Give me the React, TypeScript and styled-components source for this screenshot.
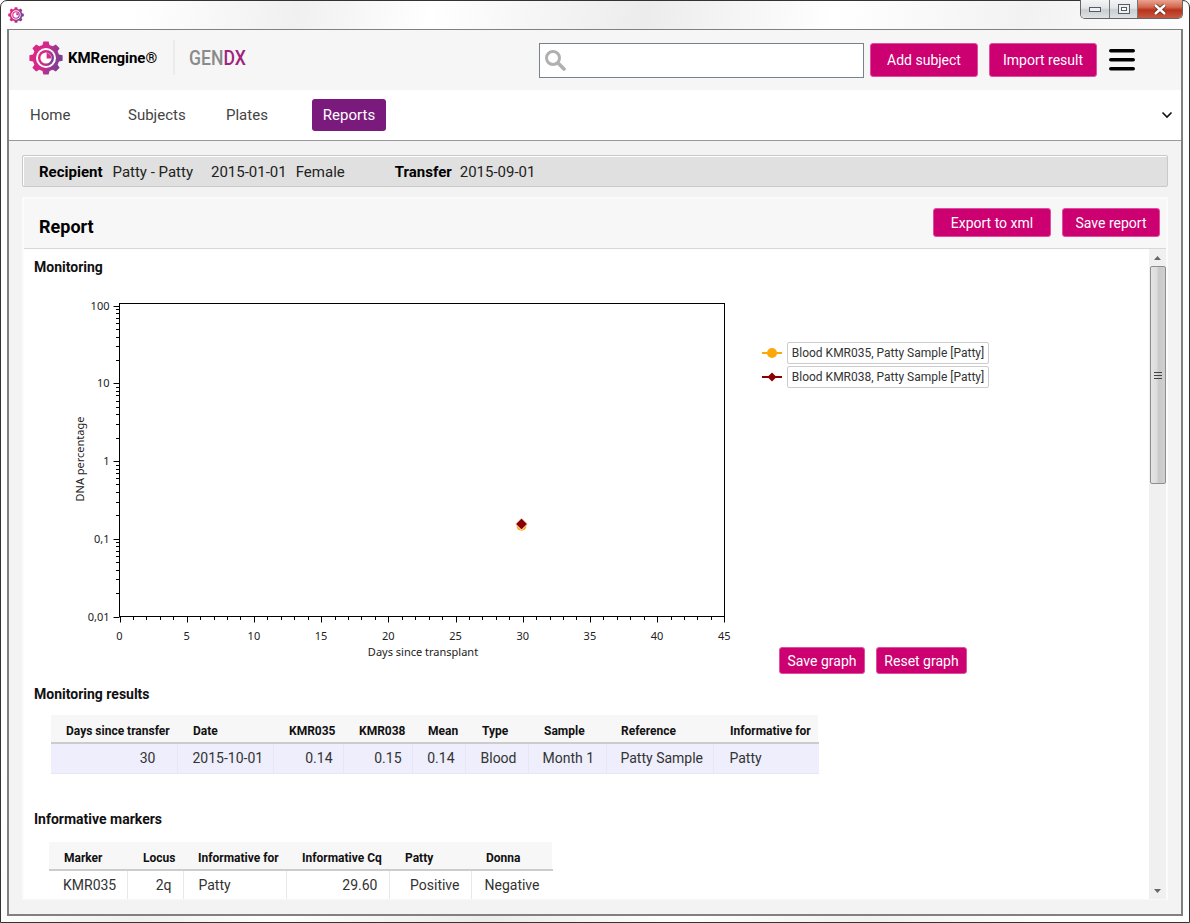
import React from "react";
import styled, { createGlobalStyle } from "styled-components";

const GlobalStyle = createGlobalStyle`
  html, body {
    margin: 0;
    padding: 0;
    background: #fff;
    font-family: Roboto, "Liberation Sans", sans-serif;
  }
  * { box-sizing: border-box; }
`;

const Window = styled.div`
  width: 1190px;
  height: 923px;
  display: flex;
  flex-direction: column;
  padding: 0 6px 6px;
  border: 1px solid #333;
  border-radius: 7px 7px 0 0;
  background: linear-gradient(100deg, #fff 10%, #f0f0f0 22%, #fff 32%, #ececec 48%, #fff 62%, #f2f2f2 76%, #fff 90%);
`;

const TitleBar = styled.div`
  height: 28px;
  flex: none;
  display: flex;
  justify-content: space-between;
  align-items: flex-start;
`;

const TitleIcon = styled.div`
  margin: 6px 0 0 1px;
  display: flex;
`;

const WindowControls = styled.div`
  display: flex;
  height: 19px;
  margin-top: -1px;
  border: 1px solid #666;
  border-top: none;
  border-radius: 0 0 5px 5px;
  overflow: hidden;
`;

const WindowButton = styled.div<{ $w: number; $close?: boolean }>`
  width: ${(p) => p.$w}px;
  display: flex;
  align-items: center;
  justify-content: center;
  border-left: 1px solid #777;
  &:first-child { border-left: none; }
  background: ${(p) =>
    p.$close
      ? "linear-gradient(#e9a491 0%, #d2674e 40%, #b9321c 55%, #c65a42 100%)"
      : "linear-gradient(#f4f5f6 0%, #e3e5e8 45%, #c9ced2 55%, #dfe2e4 100%)"};
`;

const Client = styled.div`
  flex: 1;
  min-height: 0;
  display: flex;
  flex-direction: column;
  border: 2px solid #808080;
  border-top-width: 1px;
`;

const Header = styled.header`
  height: 60px;
  flex: none;
  display: flex;
  align-items: center;
  padding: 0 46px 0 20px;
  background: #f6f6f6;
`;

const BrandGroup = styled.div`
  display: flex;
  align-items: center;
  margin-bottom: 5px;
`;

const Brand = styled.div`
  display: flex;
  align-items: center;
  gap: 5px;
  font-size: 15px;
  font-weight: 700;
  letter-spacing: -0.05px;
  color: #000;
`;

const Divider = styled.div`
  width: 2px;
  height: 35px;
  margin: 0 14px 0 16px;
  background: #ebebeb;
`;

const VendorMark = styled.div`
  width: 58px;
  font-size: 20px;
  font-weight: 500;
  color: #8a8a8a;
  white-space: nowrap;
  transform: scaleX(0.88);
  transform-origin: left center;
  b {
    font-weight: 500;
    color: #a0237f;
  }
`;

const SearchBox = styled.div`
  width: 325px;
  height: 35px;
  margin-left: auto;
  display: flex;
  align-items: center;
  padding-left: 4px;
  background: #fff;
  border: 1px solid #76838f;
`;

const PinkButton = styled.button<{ $w: number; $h?: number }>`
  width: ${(p) => p.$w}px;
  height: ${(p) => p.$h ?? 29}px;
  flex: none;
  padding: 0;
  background: #cc0071;
  border: 1px solid #e04f9f;
  border-radius: 3px;
  color: #fff;
  font-family: Roboto, sans-serif;
  font-size: 14px;
`;

const HeaderActions = styled.div`
  display: flex;
  align-items: center;
`;

const HeaderButton = styled(PinkButton)`
  margin-left: 11px;
  &:first-child { margin-left: 6px; }
`;

const Burger = styled.div`
  margin-left: 12px;
  display: flex;
`;

const Nav = styled.nav`
  height: 51px;
  flex: none;
  display: flex;
  align-items: center;
  padding: 0 8px 1px 21px;
  background: #fff;
  border-bottom: 1px solid #999;
  font-size: 15px;
  color: #444;
`;

const NavItem = styled.div<{ $w: number }>`
  width: ${(p) => p.$w}px;
  flex: none;
`;

const NavActive = styled.div`
  width: 74px;
  height: 32px;
  display: flex;
  align-items: center;
  justify-content: center;
  background: #7a1a7c;
  border-radius: 3px;
  color: #fff;
`;

const NavChevron = styled.div`
  margin-left: auto;
  display: flex;
`;

const Main = styled.main`
  flex: 1;
  min-height: 0;
  display: flex;
  flex-direction: column;
  gap: 10px;
  padding: 14px 13px 14px 13px;
  background: #f3f3f3;
`;

const SubjectBar = styled.div`
  height: 32px;
  flex: none;
  display: flex;
  align-items: center;
  padding: 1px 0 0 16px;
  background: #e0e0e0;
  border: 1px solid #c9c9c9;
  box-shadow: inset 1px 1px 0 #fff;
  border-radius: 2px;
  font-size: 15px;
  color: #222;
`;

const Field = styled.span<{ $ml?: number; $bold?: boolean }>`
  margin-left: ${(p) => p.$ml ?? 0}px;
  font-weight: ${(p) => (p.$bold ? 700 : 400)};
  color: ${(p) => (p.$bold ? "#000" : "#222")};
`;

const Card = styled.section`
  flex: 1;
  min-height: 0;
  display: flex;
  flex-direction: column;
  background: #fff;
  border: 2px solid #fbfbfb;
  border-bottom-width: 1px;
  border-bottom-color: #f8f8f8;
`;

const CardHeader = styled.div`
  height: 50px;
  flex: none;
  display: flex;
  align-items: center;
  padding: 0 6px 2px 15px;
  background: #f7f7f7;
  border-bottom: 1px solid #d8d8d8;
`;

const CardTitle = styled.h2`
  margin: 8px auto 0 0;
  font-size: 18px;
  font-weight: 700;
  color: #000;
`;

const CardActions = styled.div`
  display: flex;
  gap: 11px;
`;

const CardBody = styled.div`
  flex: 1;
  min-height: 0;
  display: flex;
`;

const ScrollContent = styled.div`
  flex: 1;
  min-width: 0;
  overflow: hidden;
  padding: 9px 0 0 10px;
`;

const SectionTitle = styled.h3<{ $mt?: number }>`
  margin: ${(p) => p.$mt ?? 0}px 0 0;
  font-size: 14px;
  line-height: 18px;
  font-weight: 700;
  color: #111;
`;

const ChartRow = styled.div`
  display: flex;
  height: 384px;
  margin: 14px 0 0 26px;
`;

const ChartSide = styled.div`
  flex: 1;
  display: flex;
  flex-direction: column;
  padding: 52px 0 0 22px;
`;

const Legend = styled.div`
  display: flex;
  flex-direction: column;
  gap: 2px;
`;

const LegendItem = styled.div`
  display: flex;
  align-items: center;
  gap: 5px;
`;

const LegendLabel = styled.div`
  width: 202px;
  height: 22px;
  display: flex;
  align-items: center;
  justify-content: center;
  background: #fff;
  border: 1px solid #ccc;
  border-radius: 2px;
  font-size: 12px;
  color: #333;
  white-space: nowrap;
`;

const GraphActions = styled.div`
  margin-top: auto;
  padding-left: 17px;
  display: flex;
  gap: 11px;
`;

const Table = styled.table<{ $ml: number; $mt: number; $w: number }>`
  width: ${(p) => p.$w}px;
  margin: ${(p) => p.$mt}px 0 0 ${(p) => p.$ml}px;
  table-layout: fixed;
  border-collapse: collapse;
`;

const Th = styled.th<{ $pl?: number }>`
  height: 28px;
  padding: 5px 0 0 ${(p) => p.$pl ?? 15}px;
  background: #f7f7f7;
  border-bottom: 2px solid #ccc;
  font-size: 12px;
  font-weight: 700;
  text-align: left;
  color: #111;
  white-space: nowrap;
`;

const Td = styled.td<{ $right?: boolean; $pad?: number; $tint?: boolean }>`
  height: 30px;
  padding: ${(p) =>
    p.$right ? `0 ${p.$pad ?? 10}px 0 0` : `0 0 0 ${p.$pad ?? 15}px`};
  background: ${(p) => (p.$tint ? "#eeeefc" : "#fff")};
  border-right: 1px solid ${(p) => (p.$tint ? "#e6e6f4" : "#e8e8e8")};
  border-bottom: 1px solid ${(p) => (p.$tint ? "#e6e6f4" : "#fff")};
  font-size: 14px;
  text-align: ${(p) => (p.$right ? "right" : "left")};
  color: #333;
  white-space: nowrap;
  &:last-child { border-right-color: ${(p) => (p.$tint ? "#eeeefc" : "#fff")}; }
`;

const ScrollBar = styled.div`
  width: 17px;
  flex: none;
  display: flex;
  flex-direction: column;
  background: #f0f0f0;
`;

const ScrollArrow = styled.div<{ $down?: boolean }>`
  height: 17px;
  flex: none;
  margin-top: ${(p) => (p.$down ? "auto" : "0")};
  display: flex;
  align-items: center;
  justify-content: center;
`;

const ScrollThumb = styled.div`
  width: 16px;
  height: 218px;
  flex: none;
  margin-left: 1px;
  display: flex;
  align-items: center;
  justify-content: center;
  border: 1px solid #8e8e8e;
  border-radius: 2px;
  background: linear-gradient(90deg, #e4e4e4 0%, #dcdcdc 40%, #c9c9c9 55%, #cfcfcf 100%);
`;

// gear outline shared by the header logo and the title bar icon
const gearPath = () => {
  const teeth = 8;
  const pts: string[] = [];
  for (let i = 0; i < teeth; i++) {
    const a = (i / teeth) * Math.PI * 2;
    const step = (Math.PI * 2) / teeth;
    const corners: [number, number][] = [
      [13.4, -0.27],
      [16.8, -0.16],
      [16.8, 0.16],
      [13.4, 0.27],
    ];
    corners.forEach(([r, k]) => {
      const t = a + k * step * 1.25;
      pts.push(`${(17 + r * Math.cos(t)).toFixed(2)} ${(17 + r * Math.sin(t)).toFixed(2)}`);
    });
  }
  return `M${pts.join("L")}Z`;
};

const GearLogo = ({ size, id }: { size: number; id: string }) => (
  <svg width={size} height={size} viewBox="0 0 34 34">
    <defs>
      <linearGradient id={id} x1="0" y1="0" x2="1" y2="0.3">
        <stop offset="0" stopColor="#e4247f" />
        <stop offset="0.55" stopColor="#cf2a8c" />
        <stop offset="1" stopColor="#7b3f92" />
      </linearGradient>
    </defs>
    <path d={gearPath()} fill={`url(#${id})`} />
    <circle cx="17" cy="17" r="10" fill="#fff" />
    <circle cx="17" cy="17" r="8" fill={`url(#${id})`} />
    <circle cx="17" cy="17" r="5.6" fill="#fff" />
    <path d="M17.6 11.8 A5.6 5.6 0 0 1 22.2 17.6 L17.6 17.6 Z" fill="#d9298a" />
  </svg>
);

// chart geometry, in svg pixels
const LEFT = 59.5;
const RIGHT = 664.5;
const TOP = 13.5;
const BOTTOM = 326.5;
const X_STEP = 13.44;
const DECADE = 77.7;

const yFor = (v: number) => BOTTOM - (Math.log10(v) + 2) * DECADE;
const xFor = (v: number) => LEFT + v * X_STEP;

const yLabels: [number, string][] = [
  [100, "100"],
  [10, "10"],
  [1, "1"],
  [0.1, "0,1"],
  [0.01, "0,01"],
];

const AxisText = styled.text`
  font-family: "Noto Sans", "Liberation Sans", sans-serif;
  font-size: 11px;
  fill: #222;
`;

const MonitoringChart = () => {
  const xTicks = Array.from({ length: 46 }, (_, i) => i);
  const yMinor: number[] = [];
  [0.01, 0.1, 1, 10].forEach((d) => {
    for (let k = 2; k <= 9; k++) yMinor.push(d * k);
  });
  return (
    <svg width={680} height={384} style={{ flex: "none" }}>
      <rect x={LEFT} y={TOP} width={RIGHT - LEFT} height={BOTTOM - TOP} fill="#fff" stroke="#000" />
      {xTicks.map((t) => (
        <line
          key={t}
          x1={Math.round(xFor(t)) + 0.5}
          x2={Math.round(xFor(t)) + 0.5}
          y1={BOTTOM}
          y2={BOTTOM + (t % 5 === 0 ? 6 : 3.5)}
          stroke="#000"
        />
      ))}
      {xTicks
        .filter((t) => t % 5 === 0)
        .map((t) => (
          <AxisText key={t} x={xFor(t)} y={BOTTOM + 23} textAnchor="middle">
            {t}
          </AxisText>
        ))}
      {yLabels.map(([v, label]) => (
        <g key={label}>
          <line x1={LEFT - 6} x2={LEFT} y1={Math.round(yFor(v)) + 0.5} y2={Math.round(yFor(v)) + 0.5} stroke="#000" />
          <AxisText x={LEFT - 10} y={yFor(v) + 4} textAnchor="end">
            {label}
          </AxisText>
        </g>
      ))}
      {yMinor.map((v) => (
        <line
          key={v}
          x1={LEFT - 3.5}
          x2={LEFT}
          y1={Math.round(yFor(v)) + 0.5}
          y2={Math.round(yFor(v)) + 0.5}
          stroke="#000"
        />
      ))}
      <AxisText x={363} y={366} textAnchor="middle">
        Days since transplant
      </AxisText>
      <AxisText transform="translate(24 169) rotate(-90)" textAnchor="middle">
        DNA percentage
      </AxisText>
      <circle cx={461.5} cy={235.7} r={5} fill="#fda70b" />
      <path d="M461.5 228 L467.5 234 L461.5 240 L455.5 234 Z" fill="#8b0000" stroke="#fff" strokeWidth={1} />
    </svg>
  );
};

const LegendGlyph = ({ color, diamond }: { color: string; diamond?: boolean }) => (
  <svg width={20} height={12} viewBox="0 0 20 12">
    <line x1={0} x2={20} y1={6} y2={6} stroke={color} strokeWidth={2} />
    {diamond ? (
      <path d="M10 1.5 L14.5 6 L10 10.5 L5.5 6 Z" fill={color} />
    ) : (
      <circle cx={10} cy={6} r={5} fill={color} />
    )}
  </svg>
);

const resultCols = [126, 96, 70, 69, 53, 63, 78, 107, 105];
const markerCols = [78, 56, 103, 103, 82, 81];

export default function App() {
  return (
    <Window>
      <GlobalStyle />
      <TitleBar>
        <TitleIcon>
          <GearLogo size={16} id="gear-small" />
        </TitleIcon>
        <WindowControls>
          <WindowButton $w={28}>
            <svg width={14} height={7} viewBox="0 0 14 7">
              <rect x={1.5} y={1.5} width={11} height={4} fill="#eef0f2" stroke="#555c66" />
            </svg>
          </WindowButton>
          <WindowButton $w={28}>
            <svg width={14} height={11} viewBox="0 0 14 11">
              <rect x={1.5} y={0.5} width={11} height={9} fill="#eef0f2" stroke="#555c66" />
              <rect x={4.5} y={3.5} width={5} height={3} fill="#fff" stroke="#555c66" />
            </svg>
          </WindowButton>
          <WindowButton $w={45} $close>
            <svg width={14} height={11} viewBox="0 0 14 11">
              <path d="M2 1 L12 10 M12 1 L2 10" stroke="#5c2a20" strokeWidth={4} />
              <path d="M2 1 L12 10 M12 1 L2 10" stroke="#fff" strokeWidth={2.4} />
            </svg>
          </WindowButton>
        </WindowControls>
      </TitleBar>
      <Client>
        <Header>
          <BrandGroup>
            <Brand>
              <GearLogo size={34} id="gear-large" />
              KMRengine®
            </Brand>
            <Divider />
            <VendorMark>
              GEN<b>DX</b>
            </VendorMark>
          </BrandGroup>
          <SearchBox>
            <svg width={22} height={22} viewBox="0 0 22 22">
              <circle cx={9} cy={9} r={6.5} fill="none" stroke="#b0b0b0" strokeWidth={3} />
              <line x1={14} y1={14} x2={20} y2={20} stroke="#b0b0b0" strokeWidth={3.6} strokeLinecap="round" />
            </svg>
          </SearchBox>
          <HeaderActions>
            <HeaderButton $w={108} $h={34}>Add subject</HeaderButton>
            <HeaderButton $w={108} $h={34}>Import result</HeaderButton>
            <Burger>
              <svg width={26} height={22} viewBox="0 0 26 22">
                <rect x={0} y={0} width={26} height={3.6} rx={1.8} fill="#000" />
                <rect x={0} y={9} width={26} height={3.6} rx={1.8} fill="#000" />
                <rect x={0} y={18} width={26} height={3.6} rx={1.8} fill="#000" />
              </svg>
            </Burger>
          </HeaderActions>
        </Header>
        <Nav>
          <NavItem $w={98}>Home</NavItem>
          <NavItem $w={98}>Subjects</NavItem>
          <NavItem $w={86}>Plates</NavItem>
          <NavActive>Reports</NavActive>
          <NavChevron>
            <svg width={12} height={8} viewBox="0 0 12 8">
              <path d="M1.5 1.5 L6 6 L10.5 1.5" fill="none" stroke="#111" strokeWidth={1.6} />
            </svg>
          </NavChevron>
        </Nav>
        <Main>
          <SubjectBar>
            <Field $bold>Recipient</Field>
            <Field $ml={10}>Patty - Patty</Field>
            <Field $ml={18}>2015-01-01</Field>
            <Field $ml={9}>Female</Field>
            <Field $ml={50} $bold>Transfer</Field>
            <Field $ml={8}>2015-09-01</Field>
          </SubjectBar>
          <Card>
            <CardHeader>
              <CardTitle>Report</CardTitle>
              <CardActions>
                <PinkButton $w={118}>Export to xml</PinkButton>
                <PinkButton $w={98}>Save report</PinkButton>
              </CardActions>
            </CardHeader>
            <CardBody>
              <ScrollContent>
                <SectionTitle>Monitoring</SectionTitle>
                <ChartRow>
                  <MonitoringChart />
                  <ChartSide>
                    <Legend>
                      <LegendItem>
                        <LegendGlyph color="#fda70b" />
                        <LegendLabel>Blood KMR035, Patty Sample [Patty]</LegendLabel>
                      </LegendItem>
                      <LegendItem>
                        <LegendGlyph color="#8b0000" diamond />
                        <LegendLabel>Blood KMR038, Patty Sample [Patty]</LegendLabel>
                      </LegendItem>
                    </Legend>
                    <GraphActions>
                      <PinkButton $w={86} $h={27}>Save graph</PinkButton>
                      <PinkButton $w={91} $h={27}>Reset graph</PinkButton>
                    </GraphActions>
                  </ChartSide>
                </ChartRow>
                <SectionTitle $mt={11}>Monitoring results</SectionTitle>
                <Table $ml={17} $mt={12} $w={767}>
                  <colgroup>
                    {resultCols.map((w, i) => (
                      <col key={i} width={w} />
                    ))}
                  </colgroup>
                  <thead>
                    <tr>
                      <Th>Days since transfer</Th>
                      <Th $pl={16}>Date</Th>
                      <Th $pl={16}>KMR035</Th>
                      <Th $pl={16}>KMR038</Th>
                      <Th $pl={16}>Mean</Th>
                      <Th $pl={17}>Type</Th>
                      <Th $pl={16}>Sample</Th>
                      <Th $pl={15}>Reference</Th>
                      <Th $pl={17}>Informative for</Th>
                    </tr>
                  </thead>
                  <tbody>
                    <tr>
                      <Td $tint $right $pad={21}>30</Td>
                      <Td $tint>2015-10-01</Td>
                      <Td $tint $right>0.14</Td>
                      <Td $tint $right>0.15</Td>
                      <Td $tint $right>0.14</Td>
                      <Td $tint>Blood</Td>
                      <Td $tint $pad={14}>Month 1</Td>
                      <Td $tint $pad={14}>Patty Sample</Td>
                      <Td $tint $pad={16}>Patty</Td>
                    </tr>
                  </tbody>
                </Table>
                <SectionTitle $mt={36}>Informative markers</SectionTitle>
                <Table $ml={15} $mt={14} $w={503}>
                  <colgroup>
                    {markerCols.map((w, i) => (
                      <col key={i} width={w} />
                    ))}
                  </colgroup>
                  <thead>
                    <tr>
                      <Th>Marker</Th>
                      <Th $pl={16}>Locus</Th>
                      <Th>Informative for</Th>
                      <Th $pl={16}>Informative Cq</Th>
                      <Th $pl={16}>Patty</Th>
                      <Th>Donna</Th>
                    </tr>
                  </thead>
                  <tbody>
                    <tr>
                      <Td $pad={14}>KMR035</Td>
                      <Td $right $pad={11}>2q</Td>
                      <Td>Patty</Td>
                      <Td $right $pad={11}>29.60</Td>
                      <Td $right $pad={11}>Positive</Td>
                      <Td $pad={13}>Negative</Td>
                    </tr>
                  </tbody>
                </Table>
              </ScrollContent>
              <ScrollBar>
                <ScrollArrow>
                  <svg width={7} height={4} viewBox="0 0 7 4">
                    <path d="M3.5 0 L7 4 L0 4 Z" fill="#666" />
                  </svg>
                </ScrollArrow>
                <ScrollThumb>
                  <svg width={8} height={7} viewBox="0 0 8 7">
                    <path d="M0 .5H8M0 3.5H8M0 6.5H8" stroke="#444" />
                  </svg>
                </ScrollThumb>
                <ScrollArrow $down>
                  <svg width={7} height={4} viewBox="0 0 7 4">
                    <path d="M0 0 L7 0 L3.5 4 Z" fill="#666" />
                  </svg>
                </ScrollArrow>
              </ScrollBar>
            </CardBody>
          </Card>
        </Main>
      </Client>
    </Window>
  );
}
